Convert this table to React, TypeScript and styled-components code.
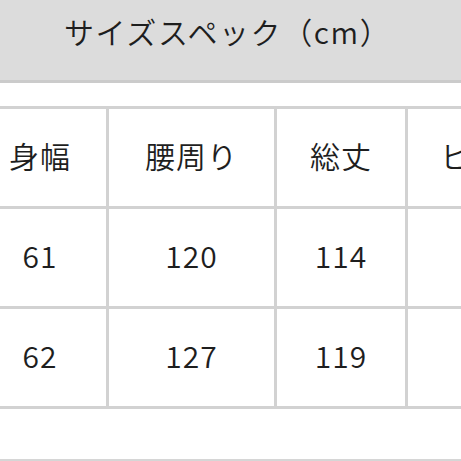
import React from "react";
import styled, { createGlobalStyle } from "styled-components";

const GlobalStyle = createGlobalStyle`
  html, body {
    margin: 0;
    padding: 0;
    background: #ffffff;
    overflow: hidden;
  }
  body {
    font-family: "Noto Sans CJK JP", "Noto Sans", sans-serif;
    color: #222222;
  }
`;

const columns = ["身幅", "腰周り", "総丈", "ヒップ"];
const rows = [
  ["61", "120", "114", "108"],
  ["62", "127", "119", "112"],
];

export default function App() {
  return (
    <>
      <GlobalStyle />
      <Page>
        <Header>
          <Title>サイズスペック（cm）</Title>
        </Header>
        <TableFrame>
          <Grid>
            {columns.map(c => (
              <Cell key={c}>{c}</Cell>
            ))}
            {rows.map((r, i) =>
              r.map((v, j) => <Cell key={`${i}-${j}`}>{v}</Cell>)
            )}
          </Grid>
        </TableFrame>
        <NextSection />
      </Page>
    </>
  );
}

/** Styled Component */
const Page = styled.div`
  width: 461px;
  height: 461px;
  display: flex;
  flex-direction: column;
  overflow: hidden;
`;

const Header = styled.div`
  height: 80px;
  background: #dcdcdc;
  border-bottom: 3px solid #cbcbcb;
  display: flex;
  align-items: flex-start;
  flex-shrink: 0;
`;

const Title = styled.div`
  padding-left: 64px;
  line-height: 62px;
  font-size: 30px;
  font-weight: 350;
  letter-spacing: 1.6px;
  color: #1e1e1e;
  white-space: nowrap;
`;

const TableFrame = styled.div`
  margin-top: 23px;
  margin-left: -29px;
  flex-shrink: 0;
`;

const Grid = styled.div`
  display: grid;
  grid-template-columns: 132px 165px 128px 156px;
  grid-auto-rows: 97px;
  gap: 3px;
  padding: 3px;
  width: max-content;
  background: #d2d2d2;
`;

const Cell = styled.div`
  background: #ffffff;
  display: flex;
  align-items: center;
  justify-content: center;
  padding-bottom: 5px;
  box-sizing: border-box;
  font-size: 30px;
  font-weight: 350;
  letter-spacing: 1px;
  color: #1e1e1e;
`;

const NextSection = styled.div`
  margin-top: auto;
  height: 2px;
  background: #d6d6d6;
  flex-shrink: 0;
`;
